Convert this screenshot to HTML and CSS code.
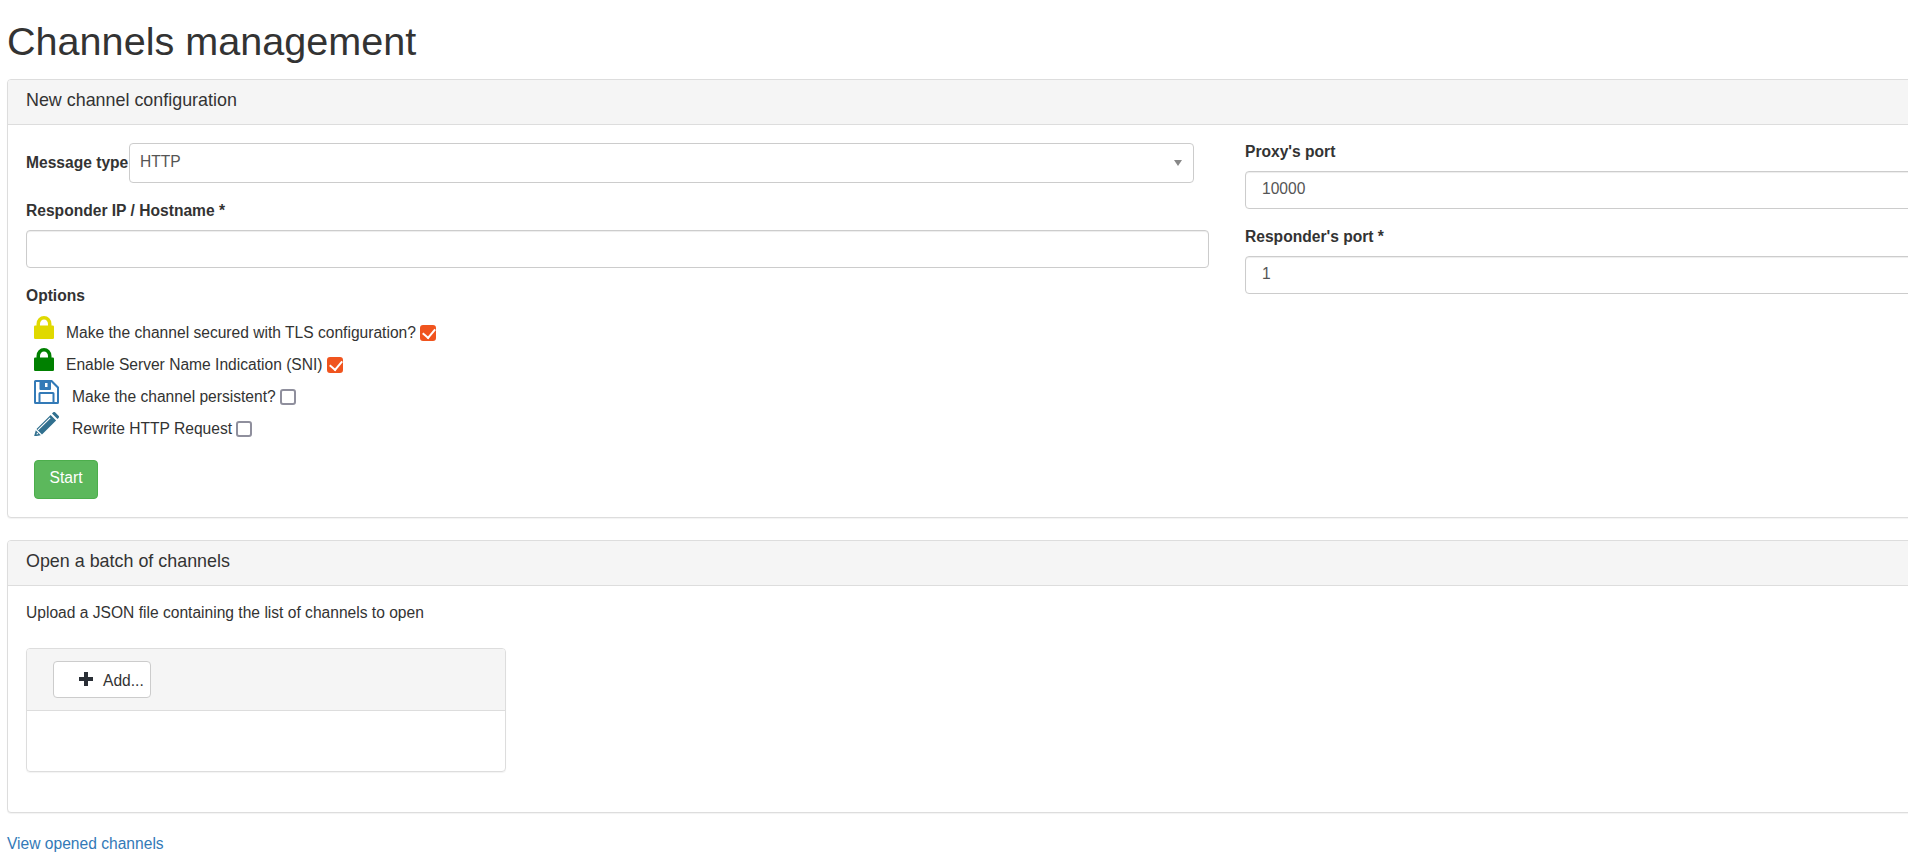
FILE: index.html
```html
<!DOCTYPE html>
<html lang="en">
<head>
<meta charset="utf-8">
<title>Channels management</title>
<link rel="stylesheet" href="styles.css">
</head>
<body>
<main class="page">
  <h1 class="title">Channels management</h1>

  <section class="panel panel-config">
    <header class="panel-head">New channel configuration</header>
    <div class="config-body">
      <div class="col-left">
        <div class="type-row">
          <label class="field-label">Message type</label>
          <div class="select-box"><span>HTTP</span><i class="caret"></i></div>
        </div>
        <label class="field-label host-label">Responder IP / Hostname *</label>
        <input class="text-input" type="text">
        <div class="field-label options-label">Options</div>
        <ul class="options">
          <li class="option">
            <svg class="icon lock" viewBox="0 0 20 24"><path fill="#e0d900" d="M2.500 9.500V8a7.500 8 0 0 1 15 0v1.500h1.300a1.200 1.200 0 0 1 1.200 1.200v11.100a1.200 1.200 0 0 1-1.200 1.200H1.200A1.200 1.200 0 0 1 0 21.800V10.700a1.200 1.200 0 0 1 1.200-1.200zM6 9.500h8V8a4 4.500 0 0 0-8 0z"/></svg>
            <span class="opt-text">Make the channel secured with TLS configuration?</span><span class="check on"></span>
          </li>
          <li class="option">
            <svg class="icon lock" viewBox="0 0 20 24"><path fill="#008000" d="M2.500 9.500V8a7.500 8 0 0 1 15 0v1.500h1.300a1.200 1.200 0 0 1 1.200 1.200v11.100a1.200 1.200 0 0 1-1.200 1.200H1.200A1.200 1.200 0 0 1 0 21.800V10.700a1.200 1.200 0 0 1 1.200-1.200zM6 9.500h8V8a4 4.500 0 0 0-8 0z"/></svg>
            <span class="opt-text">Enable Server Name Indication (SNI)</span><span class="check on"></span>
          </li>
          <li class="option">
            <svg class="icon wide" viewBox="0 0 25 24"><path fill="#337ab7" fill-rule="evenodd" d="M1.500 0H18l7 7v15.500a1.500 1.500 0 0 1-1.500 1.500H1.500A1.500 1.500 0 0 1 0 22.500v-21A1.500 1.500 0 0 1 1.500 0zM2 2v20h2.500v-8.500A1.500 1.500 0 0 1 6 12h13a1.500 1.500 0 0 1 1.500 1.500V22H23V8l-6-6v7a1 1 0 0 1-1 1H6.500a1 1 0 0 1-1-1V2zM11 3h2.500v4H11zM6.500 14v8h12v-8z"/></svg>
            <span class="opt-text">Make the channel persistent?</span><span class="check"></span>
          </li>
          <li class="option">
            <svg class="icon wide" viewBox="0 0 25 24"><path fill="#31708f" d="M18 1.500l1-1a1.600 1.600 0 0 1 2.300 0l3.200 3.200a1.600 1.600 0 0 1 0 2.300l-1 1zM16.600 2.900l5.500 5.500L8 22.500l-5.500-5.500zM1.800 18.200l5 5L0 24.500z"/><path fill="#fff" d="M3.600 17.400L15.800 5.400l.8.800L4.400 18.200zM3 20.500l1.500 1.500-2 .6z"/></svg>
            <span class="opt-text">Rewrite HTTP Request</span><span class="check"></span>
          </li>
        </ul>
        <button class="btn-start" type="button">Start</button>
      </div>
      <div class="col-right">
        <label class="field-label">Proxy's port</label>
        <input class="text-input" type="text" value="10000">
        <label class="field-label port-label">Responder's port *</label>
        <input class="text-input" type="text" value="1">
      </div>
    </div>
  </section>

  <section class="panel panel-batch">
    <header class="panel-head">Open a batch of channels</header>
    <div class="batch-body">
      <p class="batch-text">Upload a JSON file containing the list of channels to open</p>
      <div class="upload">
        <div class="upload-head">
          <button class="btn-add" type="button">
            <svg class="plus" viewBox="0 0 14 14"><path fill="#2a2f36" d="M5 0h4v5h5v4H9v5H5V9H0V5h5z"/></svg>
            <span>Add...</span>
          </button>
        </div>
        <div class="upload-body"></div>
      </div>
    </div>
  </section>

  <a class="link" href="#">View opened channels</a>
</main>
</body>
</html>
```
FILE: styles.css
```css
* { box-sizing: border-box; }
html, body { margin: 0; padding: 0; overflow: hidden; height: 100%; background: #fff; }
body { font-family: "Liberation Sans", Arial, sans-serif; font-size: 15.6px; line-height: 22px; color: #333; }
.page { width: 2400px; padding: 0 0 0 7px; }
.title { margin: 0; padding-top: 19px; height: 79px; font-size: 39.6px; line-height: 45px; font-weight: 400; }
.panel { border: 1px solid #ddd; border-radius: 4px; background: #fff; box-shadow: 0 1px 1px rgba(0,0,0,.05); }
.panel-config { height: 439px; }
.panel-batch { height: 273px; margin-top: 22px; }
.panel-head { height: 45px; padding: 9px 18px; font-size: 17.9px; line-height: 22px; background: #f5f5f5; border-bottom: 1px solid #ddd; border-radius: 3px 3px 0 0; }
.config-body { display: flex; padding: 15px 0 0 18px; }
.col-left { width: 1183px; flex: none; padding-top: 3px; }
.col-right { width: 1100px; flex: none; margin-left: 36px; padding-top: 1px; }
.field-label { display: block; font-weight: 700; font-size: 15.6px; }
.type-row { display: flex; align-items: center; justify-content: space-between; width: 1168px; height: 40px; }
.select-box { display: flex; flex: none; align-items: center; justify-content: space-between; width: 1065px; height: 40px; padding: 0 11px 2px 10px; border: 1px solid #ccc; border-radius: 4px; color: #555; }
.caret { width: 0; height: 0; margin-top: 2px; border-left: 4px solid transparent; border-right: 4px solid transparent; border-top: 6px solid #888; }
.host-label { margin-top: 17px; }
.text-input { display: block; width: 100%; height: 38px; margin-top: 8px; padding: 5px 15px 7px 16px; border: 1px solid #ccc; border-radius: 4px; font: inherit; color: #555; box-shadow: inset 0 1px 1px rgba(0,0,0,.075); outline: none; }
.options-label { margin-top: 17px; }
.options { list-style: none; margin: 10px 0 0; padding: 0 0 0 8px; }
.option { display: flex; align-items: center; height: 32px; }
.icon { flex: none; height: 24px; margin-top: -10px; }
.lock { width: 20px; margin-right: 12px; }
.wide { width: 25px; margin-right: 13px; }
.opt-text { flex: none; }
.check { flex: none; display: block; position: relative; width: 16px; height: 16px; margin-left: 4px; border: 2px solid #8f8f9d; border-radius: 3px; background: #fff; }
.check.on { background: #f0541e; border-color: #f0541e; }
.check.on::after { content: ""; position: absolute; left: 3px; top: -1px; width: 6px; height: 10px; border: solid #fff; border-width: 0 2.5px 2.5px 0; transform: rotate(40deg); }
.btn-start { display: block; margin: 15px 0 0 8px; width: 64px; height: 39px; background: #5cb85c; border: 1px solid #4cae4c; border-radius: 4px; color: #fff; font: inherit; padding: 0 0 4px; }
.port-label { margin-top: 17px; }
.batch-body { padding: 16px 18px 0; }
.batch-text { margin: 0; }
.upload { width: 480px; height: 124px; margin-top: 24px; border: 1px solid #ddd; border-radius: 4px; box-shadow: 0 1px 1px rgba(0,0,0,.05); }
.upload-head { height: 62px; padding: 12px 0 0 26px; background: #f5f5f5; border-bottom: 1px solid #ddd; border-radius: 3px 3px 0 0; }
.btn-add { display: flex; align-items: center; width: 98px; height: 37px; padding: 2px 0 0 25px; background: #fff; border: 1px solid #ccc; border-radius: 4px; font: inherit; color: #333; }
.plus { width: 14px; height: 14px; margin-right: 10px; margin-top: -3px; }
.link { display: block; margin-top: 20px; color: #337ab7; text-decoration: none; }
```
